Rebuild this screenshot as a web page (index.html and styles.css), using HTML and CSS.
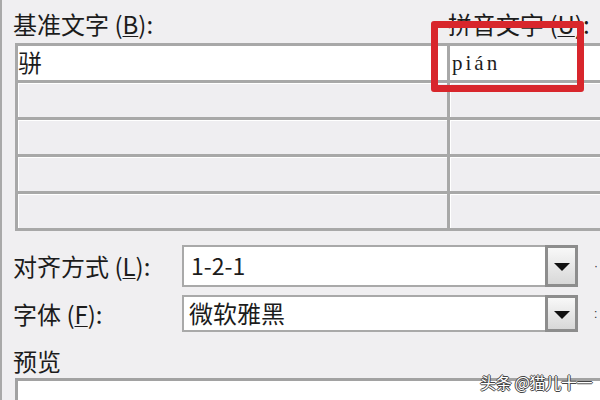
FILE: index.html
```html
<!DOCTYPE html>
<html lang="zh-CN">
<head>
<meta charset="utf-8">
<title>拼音指南</title>
<link rel="stylesheet" href="styles.css">
</head>
<body>
<div class="window">
  <div class="heads">
    <div class="label">基准文字 (<u>B</u>):</div>
    <div class="label">拼音文字 (<u>U</u>):</div>
  </div>
  <div class="table">
    <div class="row first">
      <div class="cell base">骈</div>
      <div class="cell pinyin">pián</div>
    </div>
    <div class="row"><div class="cell"></div><div class="cell"></div></div>
    <div class="row"><div class="cell"></div><div class="cell"></div></div>
    <div class="row"><div class="cell"></div><div class="cell"></div></div>
    <div class="row last"><div class="cell"></div><div class="cell"></div></div>
  </div>
  <div class="field f1">
    <div class="label">对齐方式 (<u>L</u>):</div>
    <div class="combo">
      <div class="value num">1-2-1</div>
      <div class="btn"><span class="tri"></span></div>
    </div>
    <div class="cut">·</div>
  </div>
  <div class="field f2">
    <div class="label">字体 (<u>F</u>):</div>
    <div class="combo">
      <div class="value">微软雅黑</div>
      <div class="btn"><span class="tri"></span></div>
    </div>
    <div class="cut">:</div>
  </div>
  <div class="label preview-label">预览</div>
  <div class="preview"></div>
  <div class="highlight"></div>
  <div class="watermark">头条 @猫儿十一</div>
</div>
</body>
</html>
```
FILE: styles.css
```css
html, body {
  margin: 0;
  padding: 0;
}
body {
  width: 600px;
  height: 400px;
  overflow: hidden;
  font-family: "Noto Sans CJK SC", "Noto Sans", sans-serif;
  color: #1c1c1c;
}
.window {
  position: relative;
  box-sizing: border-box;
  height: 400px;
  border-left: 2px solid #a9a9a9;
  padding-left: 13px;
  background: #f0eff1;
  overflow: hidden;
}
.label {
  font-size: 24px;
  line-height: 30px;
  white-space: nowrap;
  margin-left: -2px;
}
.label u {
  text-decoration-thickness: 1px;
  text-underline-offset: 2px;
}
.heads {
  display: grid;
  grid-template-columns: 435px 1fr;
  box-sizing: border-box;
  height: 43px;
  padding-top: 9px;
}
.table {
  width: 620px;
  border-left: 3px solid #a8a8a8;
}
.row {
  display: grid;
  grid-template-columns: 432px 1fr;
  box-sizing: border-box;
  height: 37px;
  border-top: 3px solid #a8a8a8;
}
.row.last {
  height: 40px;
  border-bottom: 3px solid #a8a8a8;
}
.cell {
  background: #efeef1;
  box-shadow: inset 0 1px #fff, inset 1px 0 #fff;
}
.cell:first-child {
  border-right: 3px solid #a8a8a8;
}
.row.first .cell {
  background: #fff;
  box-shadow: none;
}
.base {
  font-size: 24px;
  line-height: 32px;
  padding-left: 0;
}
.pinyin {
  font-family: "Liberation Serif", serif;
  font-size: 21px;
  letter-spacing: 3px;
  line-height: 34px;
  padding-left: 2px;
}
.field {
  display: grid;
  grid-template-columns: 167px 396px 1fr;
  align-items: center;
}
.f1 {
  margin-top: 14px;
  height: 42px;
}
.f2 {
  margin-top: 8px;
  height: 37px;
}
.combo {
  display: flex;
  height: 100%;
}
.value {
  flex: 1;
  box-sizing: border-box;
  border: 2px solid #a9a9a9;
  border-right: none;
  background: #fff;
  font-size: 24px;
  line-height: 32px;
  padding-left: 5px;
}
.value.num {
  font-size: 23px;
  line-height: 36px;
  padding-left: 7px;
}
.btn {
  width: 33px;
  box-sizing: border-box;
  border: 3px solid #8d8d8d;
  background: linear-gradient(#f8f8f8, #d8d8d8);
  display: flex;
  align-items: center;
  justify-content: center;
}
.tri {
  width: 0;
  height: 0;
  border-left: 8px solid transparent;
  border-right: 8px solid transparent;
  border-top: 8px solid #111;
  margin-top: 2px;
}
.cut {
  font-family: "Liberation Sans", sans-serif;
  font-size: 12px;
  line-height: 14px;
  padding-left: 16px;
  color: #333;
}
.preview-label {
  margin-top: 14px;
}
.preview {
  margin-top: 2px;
  height: 40px;
  width: 620px;
  background: #fff;
  border-top: 3px solid #a2a2a2;
  border-left: 3px solid #a2a2a2;
}
.highlight {
  position: absolute;
  left: 429px;
  top: 21px;
  width: 139px;
  height: 57px;
  border: 7px solid #d8262c;
  border-radius: 3px;
}
.watermark {
  position: absolute;
  left: 478px;
  top: 371px;
  font-size: 16px;
  line-height: 22px;
  letter-spacing: -0.3px;
  color: #fff;
  white-space: nowrap;
  text-shadow: 1px 0 #444, -1px 0 #444, 0 1px #444, 0 -1px #444;
}
```
